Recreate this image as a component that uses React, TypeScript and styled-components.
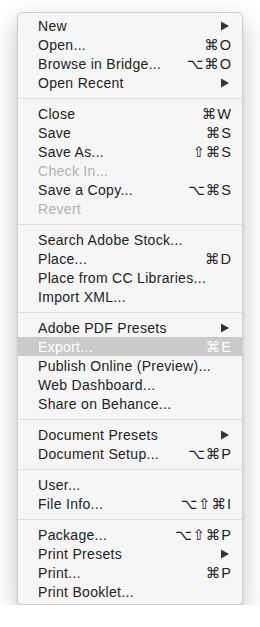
import React from "react";
import styled, { createGlobalStyle } from "styled-components";

type Entry = {
  label: string;
  shortcut?: string;
  submenu?: boolean;
  disabled?: boolean;
  active?: boolean;
};

const groups: Entry[][] = [
  [
    { label: "New", submenu: true },
    { label: "Open...", shortcut: "⌘O" },
    { label: "Browse in Bridge...", shortcut: "⌥⌘O" },
    { label: "Open Recent", submenu: true },
  ],
  [
    { label: "Close", shortcut: "⌘W" },
    { label: "Save", shortcut: "⌘S" },
    { label: "Save As...", shortcut: "⇧⌘S" },
    { label: "Check In...", disabled: true },
    { label: "Save a Copy...", shortcut: "⌥⌘S" },
    { label: "Revert", disabled: true },
  ],
  [
    { label: "Search Adobe Stock..." },
    { label: "Place...", shortcut: "⌘D" },
    { label: "Place from CC Libraries..." },
    { label: "Import XML..." },
  ],
  [
    { label: "Adobe PDF Presets", submenu: true },
    { label: "Export...", shortcut: "⌘E", active: true },
    { label: "Publish Online (Preview)..." },
    { label: "Web Dashboard..." },
    { label: "Share on Behance..." },
  ],
  [
    { label: "Document Presets", submenu: true },
    { label: "Document Setup...", shortcut: "⌥⌘P" },
  ],
  [
    { label: "User..." },
    { label: "File Info...", shortcut: "⌥⇧⌘I" },
  ],
  [
    { label: "Package...", shortcut: "⌥⇧⌘P" },
    { label: "Print Presets", submenu: true },
    { label: "Print...", shortcut: "⌘P" },
    { label: "Print Booklet..." },
  ],
];

const SubmenuArrow = () => (
  <svg width="8" height="10" viewBox="0 0 8 10">
    <path d="M0 0.5 L8 5 L0 9.5 Z" fill="currentColor" />
  </svg>
);

export default function App() {
  return (
    <>
      <GlobalStyle />
      <Menu>
        {groups.map((group, gi) => (
          <React.Fragment key={gi}>
            {gi > 0 && <Separator />}
            {group.map((item) => (
              <Item
                key={item.label}
                $disabled={item.disabled}
                $active={item.active}
              >
                <Label>{item.label}</Label>
                {item.shortcut && <Shortcut>{item.shortcut}</Shortcut>}
                {item.submenu && (
                  <Arrow>
                    <SubmenuArrow />
                  </Arrow>
                )}
              </Item>
            ))}
          </React.Fragment>
        ))}
      </Menu>
    </>
  );
}

const GlobalStyle = createGlobalStyle`
  body {
    margin: 0;
    background: #ffffff;
    font-family: "Liberation Sans", Arial, sans-serif;
  }
`;

const Menu = styled.div`
  box-sizing: border-box;
  width: 226px;
  margin: 12px 0 0 17px;
  padding: 3px 0;
  background: #f6f6f6;
  border: 1px solid #d0d0d0;
  border-radius: 5px;
  box-shadow: 0 10px 24px rgba(0, 0, 0, 0.24), 0 1px 3px rgba(0, 0, 0, 0.08);
`;

const Item = styled.div<{ $disabled?: boolean; $active?: boolean }>`
  display: flex;
  align-items: center;
  height: 19px;
  padding: 0 11px 0 20px;
  font-size: 14px;
  letter-spacing: 0.3px;
  color: ${({ $disabled, $active }) =>
    $active ? "#ffffff" : $disabled ? "#b2b2b2" : "#222222"};
  background: ${({ $active }) => ($active ? "#cacaca" : "transparent")};
`;

const Label = styled.span`
  flex: 1;
  white-space: nowrap;
`;

const Shortcut = styled.span`
  font-family: "Liberation Sans", "DejaVu Sans", sans-serif;
  font-size: 14.5px;
  letter-spacing: 1px;
  margin-right: -1px;
  white-space: nowrap;
`;

const Arrow = styled.span`
  display: flex;
  align-items: center;
  margin-right: 2px;
  color: #333333;
`;

const Separator = styled.div`
  height: 12px;
  display: flex;
  align-items: center;

  &::before {
    content: "";
    flex: 1;
    height: 1px;
    background: #e0e0e0;
  }
`;
